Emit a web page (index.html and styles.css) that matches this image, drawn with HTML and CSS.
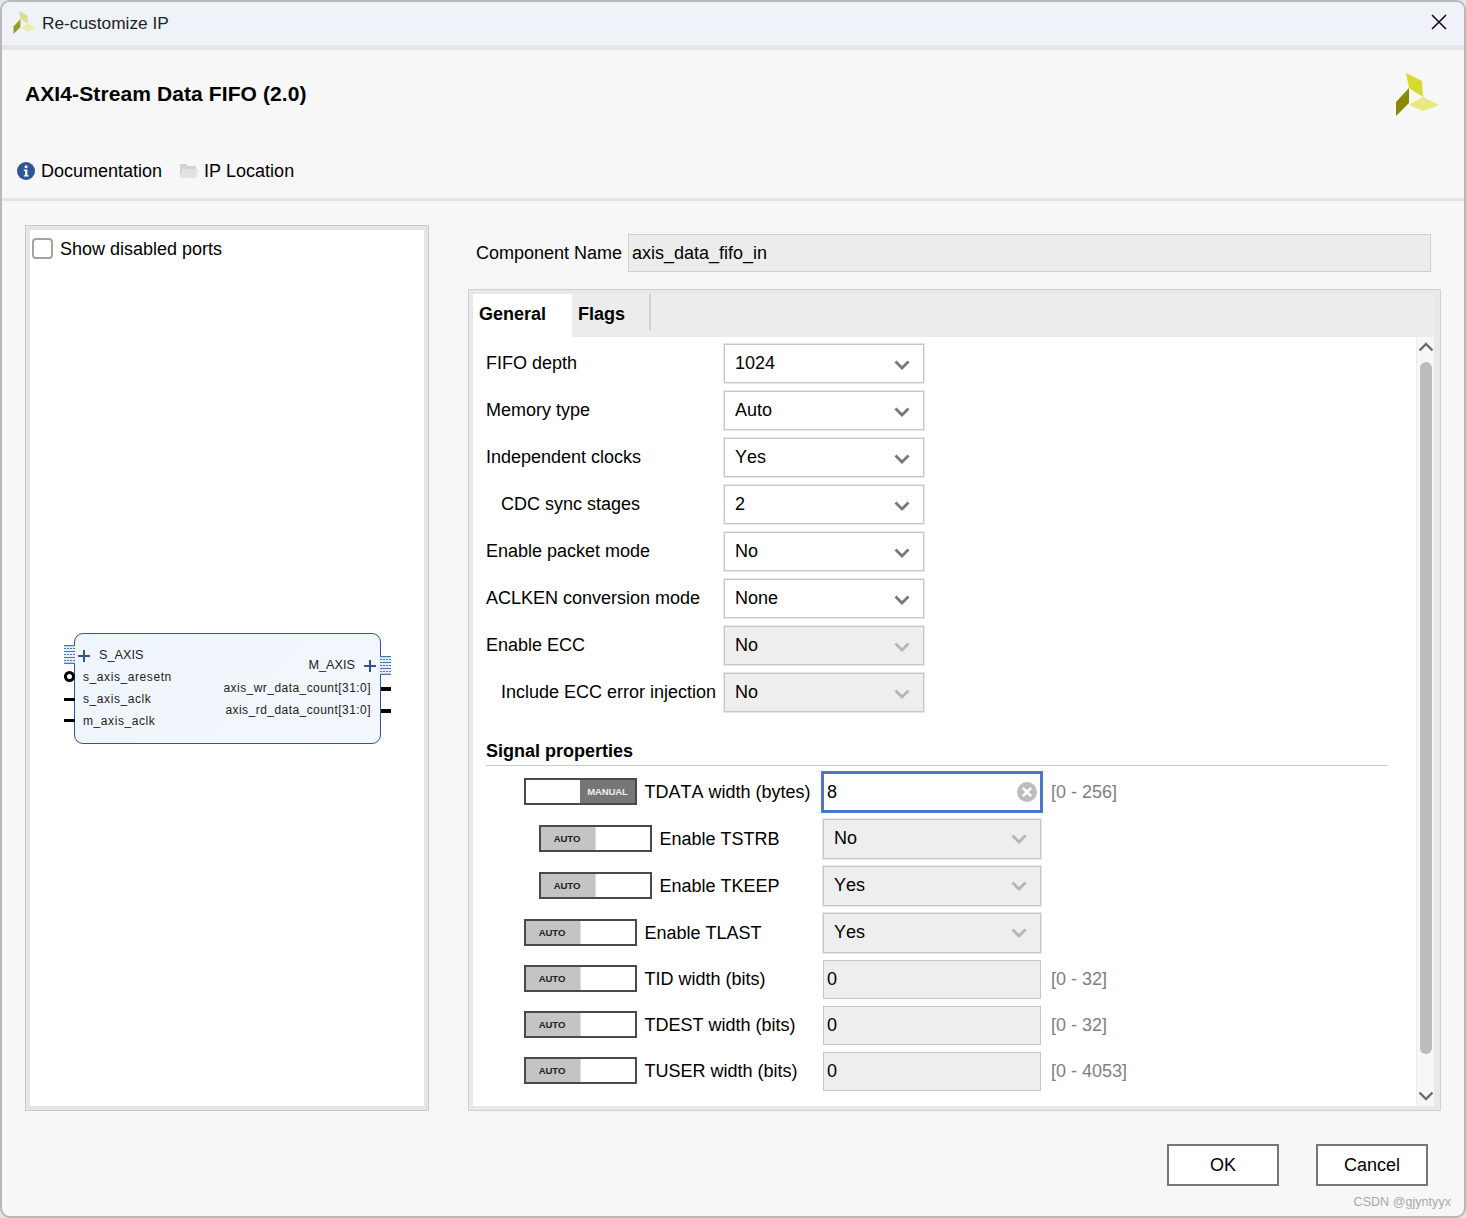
FILE: index.html
```html
<!DOCTYPE html>
<html lang="en">
<head>
<meta charset="utf-8">
<title>Re-customize IP</title>
<link rel="stylesheet" href="styles.css">
</head>
<body>
<div class="window">
  <div class="titlebar">
    <svg class="logo-small" viewBox="0 0 43 43"><polygon points="10,0 26,8 27,24 13,15" fill="#dcdf8a"/><polygon points="13,15 13,30 0,43 0,29" fill="#9a9a20"/><polygon points="27,24 43,32 27,38 13,32" fill="#eaeda8"/></svg>
    <span class="title-text">Re-customize IP</span>
    <svg class="close" viewBox="0 0 16 16"><path d="M1 1L15 15M15 1L1 15" stroke="#111" stroke-width="1.6" fill="none"/></svg>
  </div>
  <div class="header">
    <div class="header-top">
      <h1 class="ip-name">AXI4-Stream Data FIFO (2.0)</h1>
      <svg class="logo-large" viewBox="0 0 43 43"><polygon points="10,0 26,8 27,24 13,15" fill="#d5dc2f"/><polygon points="13,15 13,30 0,43 0,29" fill="#8a8a00"/><polygon points="27,24 43,32 27,38 13,32" fill="#e6ea7c"/></svg>
    </div>
    <div class="links">
      <span class="link">
        <svg class="info" viewBox="0 0 18 18"><circle cx="9" cy="9" r="9" fill="#2f5597"/><rect x="7.8" y="3.5" width="2.6" height="2.6" fill="#fff"/><path d="M6.8 7.6h3.6v5.6h1.2v1.4H6.8v-1.4H8V9H6.8z" fill="#fff"/></svg>
        Documentation
      </span>
      <span class="link">
        <svg class="folder" viewBox="0 0 18 16"><path d="M0 1h6l1.5 2H16v3H3L0 14z" fill="#d2d2d2"/><path d="M3 6h15l-2 9H0z" fill="#e2e2e2"/></svg>
        IP Location
      </span>
    </div>
  </div>
  <div class="main">
    <div class="preview-panel">
      <div class="preview">
        <label class="show-ports"><span class="checkbox"></span>Show disabled ports</label>
        <div class="block">
          <svg class="bus bus-left" viewBox="0 0 11 19"><path d="M0 0h11v19H0z" fill="#e6edf7"/><path d="M0 .6h11M0 6.5h11M0 12.5h11M0 18.4h11" stroke="#4a78b0" stroke-width="1.2"/><path d="M0 3.5h11M0 9.5h11M0 15.5h11" stroke="#4a78b0" stroke-width="1.2" stroke-dasharray="2 1"/></svg>
          <svg class="plus plus-left" viewBox="0 0 12 12"><path d="M6 0v12M0 6h12" stroke="#2f5597" stroke-width="2"/></svg>
          <span class="pin pin-saxis">S_AXIS</span>
          <span class="pin pin-left pin-reset">s_axis_aresetn</span>
          <span class="pin pin-left pin-sclk">s_axis_aclk</span>
          <span class="pin pin-left pin-mclk">m_axis_aclk</span>
          <span class="pin pin-maxis">M_AXIS</span>
          <span class="pin pin-wr">axis_wr_data_count[31:0]</span>
          <span class="pin pin-rd">axis_rd_data_count[31:0]</span>
          <svg class="plus plus-right" viewBox="0 0 12 12"><path d="M6 0v12M0 6h12" stroke="#2f5597" stroke-width="2"/></svg>
          <svg class="bus bus-right" viewBox="0 0 11 19"><path d="M0 0h11v19H0z" fill="#e6edf7"/><path d="M0 .6h11M0 6.5h11M0 12.5h11M0 18.4h11" stroke="#4a78b0" stroke-width="1.2"/><path d="M0 3.5h11M0 9.5h11M0 15.5h11" stroke="#4a78b0" stroke-width="1.2" stroke-dasharray="2 1"/></svg>
          <span class="wire wire-sclk"></span>
          <span class="wire wire-mclk"></span>
          <span class="wire wire-reset"></span>
          <span class="reset-dot"></span>
          <span class="wire-bus wire-wr"></span>
          <span class="wire-bus wire-rd"></span>
        </div>
      </div>
    </div>
    <div class="config">
      <div class="component-row">
        <span class="component-label">Component Name</span>
        <div class="component-input">axis_data_fifo_in</div>
      </div>
      <div class="tabs-panel">
        <div class="tabs">
          <span class="tab tab-active">General</span>
          <span class="tab tab-flags">Flags</span>
        </div>
        <div class="tab-body">
          <div class="form">
            <div class="form-rows">
              <div class="row"><span class="label">FIFO depth</span><div class="select"><span>1024</span><svg class="chev" viewBox="0 0 16 10"><path d="M1.5 1.5L8 8l6.5-6.5" /></svg></div></div>
              <div class="row"><span class="label">Memory type</span><div class="select"><span>Auto</span><svg class="chev" viewBox="0 0 16 10"><path d="M1.5 1.5L8 8l6.5-6.5" /></svg></div></div>
              <div class="row"><span class="label">Independent clocks</span><div class="select"><span>Yes</span><svg class="chev" viewBox="0 0 16 10"><path d="M1.5 1.5L8 8l6.5-6.5" /></svg></div></div>
              <div class="row"><span class="label label-indent">CDC sync stages</span><div class="select"><span>2</span><svg class="chev" viewBox="0 0 16 10"><path d="M1.5 1.5L8 8l6.5-6.5" /></svg></div></div>
              <div class="row"><span class="label">Enable packet mode</span><div class="select"><span>No</span><svg class="chev" viewBox="0 0 16 10"><path d="M1.5 1.5L8 8l6.5-6.5" /></svg></div></div>
              <div class="row"><span class="label">ACLKEN conversion mode</span><div class="select"><span>None</span><svg class="chev" viewBox="0 0 16 10"><path d="M1.5 1.5L8 8l6.5-6.5" /></svg></div></div>
              <div class="row"><span class="label">Enable ECC</span><div class="select select-off"><span>No</span><svg class="chev" viewBox="0 0 16 10"><path d="M1.5 1.5L8 8l6.5-6.5" /></svg></div></div>
              <div class="row"><span class="label label-indent">Include ECC error injection</span><div class="select select-off"><span>No</span><svg class="chev" viewBox="0 0 16 10"><path d="M1.5 1.5L8 8l6.5-6.5" /></svg></div></div>
            </div>
            <div class="section-title">Signal properties</div>
            <div class="signal-rows">
              <div class="sig-row">
                <div class="sig-name"><span class="toggle toggle-manual"><span class="toggle-blank"></span><span class="toggle-on">MANUAL</span></span><span class="sig-label">TDATA width (bytes)</span></div>
                <div class="input input-focus"><span>8</span><svg class="clear" viewBox="0 0 20 20"><circle cx="10" cy="10" r="10" fill="#bdbdbd"/><path d="M5.8 5.8l8.4 8.4M14.2 5.8l-8.4 8.4" stroke="#fff" stroke-width="2.6"/></svg></div>
                <span class="range">[0 - 256]</span>
              </div>
              <div class="sig-row">
                <div class="sig-name sig-indent"><span class="toggle"><span class="toggle-auto">AUTO</span><span class="toggle-blank"></span></span><span class="sig-label">Enable TSTRB</span></div>
                <div class="select select-off select-wide"><span>No</span><svg class="chev" viewBox="0 0 16 10"><path d="M1.5 1.5L8 8l6.5-6.5" /></svg></div>
              </div>
              <div class="sig-row">
                <div class="sig-name sig-indent"><span class="toggle"><span class="toggle-auto">AUTO</span><span class="toggle-blank"></span></span><span class="sig-label">Enable TKEEP</span></div>
                <div class="select select-off select-wide"><span>Yes</span><svg class="chev" viewBox="0 0 16 10"><path d="M1.5 1.5L8 8l6.5-6.5" /></svg></div>
              </div>
              <div class="sig-row">
                <div class="sig-name"><span class="toggle"><span class="toggle-auto">AUTO</span><span class="toggle-blank"></span></span><span class="sig-label">Enable TLAST</span></div>
                <div class="select select-off select-wide"><span>Yes</span><svg class="chev" viewBox="0 0 16 10"><path d="M1.5 1.5L8 8l6.5-6.5" /></svg></div>
              </div>
              <div class="sig-row sig-row-num">
                <div class="sig-name"><span class="toggle"><span class="toggle-auto">AUTO</span><span class="toggle-blank"></span></span><span class="sig-label">TID width (bits)</span></div>
                <div class="input input-off"><span>0</span></div>
                <span class="range">[0 - 32]</span>
              </div>
              <div class="sig-row sig-row-num">
                <div class="sig-name"><span class="toggle"><span class="toggle-auto">AUTO</span><span class="toggle-blank"></span></span><span class="sig-label">TDEST width (bits)</span></div>
                <div class="input input-off"><span>0</span></div>
                <span class="range">[0 - 32]</span>
              </div>
              <div class="sig-row sig-row-num">
                <div class="sig-name"><span class="toggle"><span class="toggle-auto">AUTO</span><span class="toggle-blank"></span></span><span class="sig-label">TUSER width (bits)</span></div>
                <div class="input input-off"><span>0</span></div>
                <span class="range">[0 - 4053]</span>
              </div>
            </div>
          </div>
          <div class="scrollbar">
            <svg class="scroll-arrow" viewBox="0 0 16 10"><path d="M1.5 8.5L8 2l6.5 6.5"/></svg>
            <div class="scroll-thumb"></div>
            <svg class="scroll-arrow scroll-arrow-down" viewBox="0 0 16 10"><path d="M1.5 1.5L8 8l6.5-6.5"/></svg>
          </div>
        </div>
      </div>
    </div>
  </div>
  <div class="footer">
    <button class="btn">OK</button>
    <button class="btn">Cancel</button>
  </div>
  <span class="watermark">CSDN @gjyntyyx</span>
  <span class="edge-strip"></span>
</div>
</body>
</html>
```
FILE: styles.css
```css
* { box-sizing: border-box; }
html, body { margin: 0; padding: 0; }
body {
  width: 1466px;
  height: 1218px;
  background: #e6e6e6;
  font-family: "Liberation Sans", Arial, sans-serif;
  font-size: 18px;
  font-kerning: none;
  color: #000;
  overflow: hidden;
}
.window {
  position: relative;
  width: 1466px;
  height: 1218px;
  border: 2px solid #b8b8b8;
  border-radius: 10px;
  background: #f7f7f7;
  overflow: hidden;
  display: flex;
  flex-direction: column;
}
.edge-strip {
  position: absolute;
  left: -2px;
  top: 256px;
  width: 2px;
  height: 72px;
  background: #c9b26a;
}
.titlebar {
  flex: none;
  height: 48px;
  background: #eff3f9;
  border-bottom: 5px solid #e6e6e6;
  display: flex;
  align-items: center;
  padding: 0 17px 0 11px;
}
.logo-small { width: 24px; height: 23px; margin-top: -3px; }
.title-text { margin-left: 5px; font-size: 17.3px; color: #222; }
.close { width: 16px; height: 16px; margin-left: auto; margin-bottom: 3px; }
.header {
  flex: none;
  height: 151px;
  border-bottom: 3px solid #e4e4e4;
  display: flex;
  flex-direction: column;
  padding-left: 15px;
}
.header-top {
  flex: none;
  height: 96px;
  display: flex;
  justify-content: space-between;
  padding: 23px 25px 0 8px;
}
.ip-name { margin: 9px 0 0; font-size: 21px; line-height: 24px; font-weight: 700; letter-spacing: .1px; }
.logo-large { width: 43px; height: 43px; }
.links { display: flex; gap: 18px; height: 50px; align-items: center; }
.link { display: flex; align-items: center; gap: 6px; }
.info { width: 18px; height: 18px; }
.folder { width: 18px; height: 16px; }
.main {
  flex: none;
  display: flex;
  gap: 39px;
  padding: 24px 0 0 23px;
}
.preview-panel {
  width: 404px;
  height: 886px;
  border: 1px solid #c9c9c9;
  background: #e6e6e6;
  padding: 4px;
}
.preview { position: relative; width: 100%; height: 100%; background: #fff; padding: 8px 2px; }
.show-ports { display: flex; align-items: center; gap: 7px; line-height: 20px; }
.checkbox {
  width: 21px;
  height: 21px;
  border: 2px solid #a3a3a3;
  border-radius: 4px;
  background: #fff;
}
.block {
  position: absolute;
  left: 44px;
  top: 403px;
  width: 307px;
  height: 111px;
  border: 1px solid #2f5597;
  border-radius: 9px;
  background: linear-gradient(135deg, #eff5fc, #f3f7fd);
  font-size: 12px;
  color: #222;
}
.pin { position: absolute; white-space: nowrap; line-height: 14px; letter-spacing: .45px; }
.pin-left { letter-spacing: .58px; }
.pin-saxis { left: 24px; top: 14px; font-size: 12.7px; letter-spacing: 0; }
.pin-reset { left: 8px; top: 36px; }
.pin-sclk { left: 8px; top: 58px; }
.pin-mclk { left: 8px; top: 80px; }
.pin-maxis { right: 25px; top: 24px; font-size: 12.7px; letter-spacing: 0; }
.pin-wr { right: 9px; top: 47px; }
.pin-rd { right: 9px; top: 69px; }
.plus { position: absolute; width: 12px; height: 12px; }
.plus-left { left: 3px; top: 16px; }
.plus-right { right: 4px; top: 26px; }
.bus { position: absolute; width: 11px; height: 19px; }
.bus-left { left: -11px; top: 11px; }
.bus-right { right: -11px; top: 22px; }
.wire { position: absolute; left: -11px; width: 11px; height: 3px; background: #000; }
.wire-reset { width: 3px; top: 41px; }
.wire-sclk { top: 64px; }
.wire-mclk { top: 85px; }
.reset-dot {
  position: absolute;
  left: -11px;
  top: 37px;
  width: 11px;
  height: 11px;
  border: 3.5px solid #000;
  border-radius: 50%;
  background: #fff;
}
.wire-bus { position: absolute; right: -11px; width: 10px; height: 4px; background: #000; }
.wire-wr { top: 53px; }
.wire-rd { top: 75px; }
.config { width: 973px; display: flex; flex-direction: column; }
.component-row { display: flex; align-items: center; height: 38px; margin-top: 9px; padding-left: 8px; }
.component-label { width: 152px; }
.component-input {
  width: 803px;
  height: 38px;
  background: #ececec;
  border: 1px solid #cfcfcf;
  padding-left: 3px;
  line-height: 36px;
}
.tabs-panel {
  margin-top: 17px;
  height: 822px;
  border: 1px solid #cfcfcf;
  background: #e9e9e9;
  padding: 4px 6px 4px 4px;
  display: flex;
  flex-direction: column;
}
.tabs { flex: none; height: 43px; display: flex; background: #ececec; margin-right: -1px; }
.tab { font-weight: 700; line-height: 40px; padding-left: 6px; }
.tab-active { width: 99px; background: #fff; }
.tab-flags { width: 79px; height: 36px; border-right: 2px solid #d0d0d0; }
.tab-body { flex: 1; display: flex; min-height: 0; }
.form { flex: 1; background: #fff; padding: 7px 28px 0 13px; }
.form-rows { display: flex; flex-direction: column; gap: 7px; }
.row { display: flex; align-items: center; height: 40px; }
.label { width: 238px; flex: none; margin-top: -2px; }
.label-indent { padding-left: 15px; white-space: nowrap; }
.select {
  width: 200px;
  height: 39px;
  flex: none;
  border: 1px solid #c6c6c6;
  box-shadow: 0 0 0 1px #e8e8e8;
  background: #fff;
  display: flex;
  align-items: center;
  justify-content: space-between;
  padding: 0 13px 0 10px;
  margin-top: -1px;
}
.select > span { margin-top: -1px; }
.select-off { background: #eeeeee; }
.select-wide { width: 218px; margin-top: 0; height: 40px; }
.chev { width: 16px; height: 10px; fill: none; stroke: #777; stroke-width: 2.8; margin-top: 2px; }
.select-off .chev { stroke: #b4b4b4; }
.select-wide .chev { margin-top: 0; }
.section-title {
  margin-top: 29px;
  height: 24px;
  font-weight: 700;
  line-height: 18px;
  border-bottom: 1px solid #cccccc;
}
.signal-rows { display: flex; flex-direction: column; gap: 7px; margin-top: 6px; }
.sig-row { display: flex; align-items: center; }
.sig-name { width: 337px; flex: none; display: flex; align-items: center; gap: 7.5px; padding-left: 38px; }
.sig-indent { padding-left: 53px; }
.sig-label { white-space: nowrap; }
.toggle {
  width: 113px;
  height: 27px;
  flex: none;
  margin-top: -1px;
  display: flex;
  border: 2px solid #4a4a4a;
  background: #fff;
  font-size: 9.6px;
  letter-spacing: -.15px;
  font-weight: 700;
  line-height: 24px;
  text-align: center;
}
.sig-row-num .toggle { margin-top: -3px; }
.toggle-blank { flex: 1; }
.toggle-on { width: 55px; background: #767676; color: #eee; }
.toggle-auto { width: 55px; padding-right: 2px; background: #c4c4c4; color: #222; border-right: 1px solid #ddd; }
.input {
  width: 218px;
  height: 39px;
  flex: none;
  border: 1px solid #c6c6c6;
  padding-left: 3px;
  display: flex;
  align-items: center;
  justify-content: space-between;
}
.input-off { background: #eeeeee; }
.input-focus {
  width: 222px;
  height: 42px;
  margin: -1px -2px -1px -2px;
  border: 3px solid #4a77c8;
  padding: 0 3px 0 3px;
  background: #fff;
}
.clear { width: 20px; height: 20px; }
.range { margin-left: 10px; color: #808080; }
.scrollbar {
  flex: none;
  width: 18px;
  background: #f7f7f7;
  border-left: 1px solid #ececec;
  display: flex;
  flex-direction: column;
  align-items: center;
}
.scroll-arrow { width: 16px; height: 10px; fill: none; stroke: #6b6b6b; stroke-width: 2.4; flex: none; margin-top: 5px; }
.scroll-arrow-down { margin-top: auto; margin-bottom: 5px; }
.scroll-thumb { width: 12px; height: 692px; margin-top: 10px; border-radius: 6px; background: #bcbcbc; }
.footer { flex: 1; display: flex; justify-content: flex-end; gap: 37px; padding: 33px 36px 0 0; }
.btn {
  width: 112px;
  height: 42px;
  border: 2px solid #777;
  background: #fff;
  font: 18px "Liberation Sans", Arial, sans-serif;
  font-kerning: none;
  color: #000;
}
.watermark { position: absolute; right: 13px; bottom: 7px; font-size: 12.6px; color: #a9a9a9; }
```
